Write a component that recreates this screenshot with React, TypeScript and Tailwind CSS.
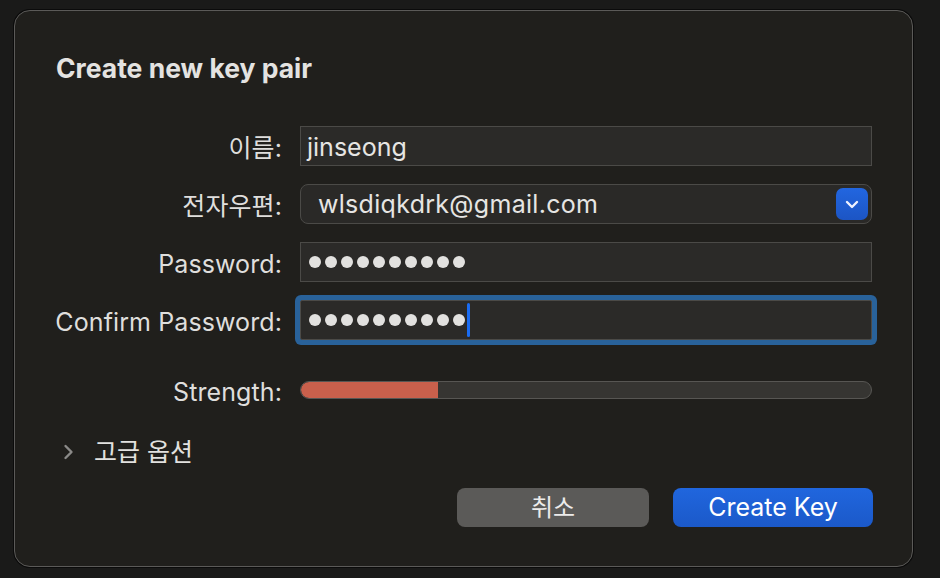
import React from "react";

const font = { fontFamily: "Inter, 'Noto Sans CJK KR', sans-serif" };

const Label = ({ children }: { children: React.ReactNode }) => (
  <div className="flex items-center justify-end whitespace-nowrap text-[25px] leading-[30px] tracking-[0.1px] text-[#dfdedc]">
    <span className="translate-y-[2px]">{children}</span>
  </div>
);

const Dots = ({ count }: { count: number }) => (
  <div className="flex items-center gap-[4px]">
    {Array.from({ length: count }).map((_, i) => (
      <span key={i} className="block w-[12px] h-[12px] rounded-full bg-[#e2e1df]" />
    ))}
  </div>
);

const App = () => {
  const strength = 0.24;

  return (
    <div className="w-[940px] h-[578px] bg-[#1a1a19] pt-[10px] pl-[14px] overflow-hidden" style={font}>
      <div className="w-[899px] h-[557px] rounded-[16px] border border-[#5b5a58] shadow-[0_0_0_1px_#0b0b0b] bg-[#201f1c] flex flex-col">
        <h1 className="pl-[41px] pt-[41px] text-[26.5px] leading-[32px] font-bold text-[#e4e3e1]">
          Create new key pair
        </h1>

        <div className="mt-[42px] ml-[37px] grid grid-cols-[230px_572px] gap-x-[18px] items-center">
          <Label>이름:</Label>
          <div className="h-[40px] bg-[#2b2a28] border border-[#4b4a47] flex items-center pl-[6px] text-[25px] text-[#e6e5e3]">
            <span className="translate-y-[2px]">jinseong</span>
          </div>

          <div className="col-span-2 h-[18px]" />

          <Label>전자우편:</Label>
          <div className="h-[40px] rounded-[8px] bg-[#2a2927] border border-[#4b4a47] flex items-center justify-between pl-[17px] pr-[3px] text-[25px] tracking-[0.3px] text-[#e6e5e3]">
            <span className="translate-y-[1px]">wlsdiqkdrk@gmail.com</span>
            <span className="w-[32px] h-[32px] rounded-[7px] bg-gradient-to-b from-[#2266e0] to-[#1c55c4] flex items-center justify-center">
              <svg width="14" height="9" viewBox="0 0 14 9" fill="none">
                <path d="M2 2l5 5 5-5" stroke="#eef2ff" strokeWidth="2.4" strokeLinecap="round" strokeLinejoin="round" />
              </svg>
            </span>
          </div>

          <div className="col-span-2 h-[18px]" />

          <Label>Password:</Label>
          <div className="h-[40px] bg-[#2b2a28] border border-[#4b4a47] flex items-center pl-[8px]">
            <Dots count={10} />
          </div>

          <div className="col-span-2 h-[18px]" />

          <Label>Confirm Password:</Label>
          <div className="h-[40px] bg-[#2b2a28] border border-[#4b4a47] ring-[5px] ring-[#29629a] rounded-[2px] flex items-center pl-[8px] gap-[2px]">
            <Dots count={10} />
            <span className="block w-[3px] h-[34px] rounded-full bg-[#1a6cf2]" />
          </div>

          <div className="col-span-2 h-[35px]" />

          <Label>Strength:</Label>
          <div className="h-[18px] rounded-full border border-[#575653] bg-[#363532] overflow-hidden">
            <div className="h-full bg-[#c9604c] rounded-l-full" style={{ width: `${strength * 100}%` }} />
          </div>
        </div>

        <div className="mt-[32px] ml-[48px] flex items-center gap-[20px] text-[25px] leading-[30px] text-[#e2e1df]">
          <svg width="11" height="16" viewBox="0 0 11 16" fill="none">
            <path d="M2.5 2l6 6-6 6" stroke="#8b8a88" strokeWidth="2.4" strokeLinecap="round" strokeLinejoin="round" />
          </svg>
          <span>고급 옵션</span>
        </div>

        <div className="mt-[21px] mr-[39px] flex justify-end gap-[24px]">
          <button className="w-[192px] h-[39px] rounded-[8px] bg-[#5b5a58] text-[24px] text-[#ecebea]">
            취소
          </button>
          <button className="w-[200px] h-[39px] rounded-[8px] bg-gradient-to-b from-[#2066de] to-[#1b59c9] text-[25px] text-white">
            Create Key
          </button>
        </div>
      </div>
    </div>
  );
};

export default App;
